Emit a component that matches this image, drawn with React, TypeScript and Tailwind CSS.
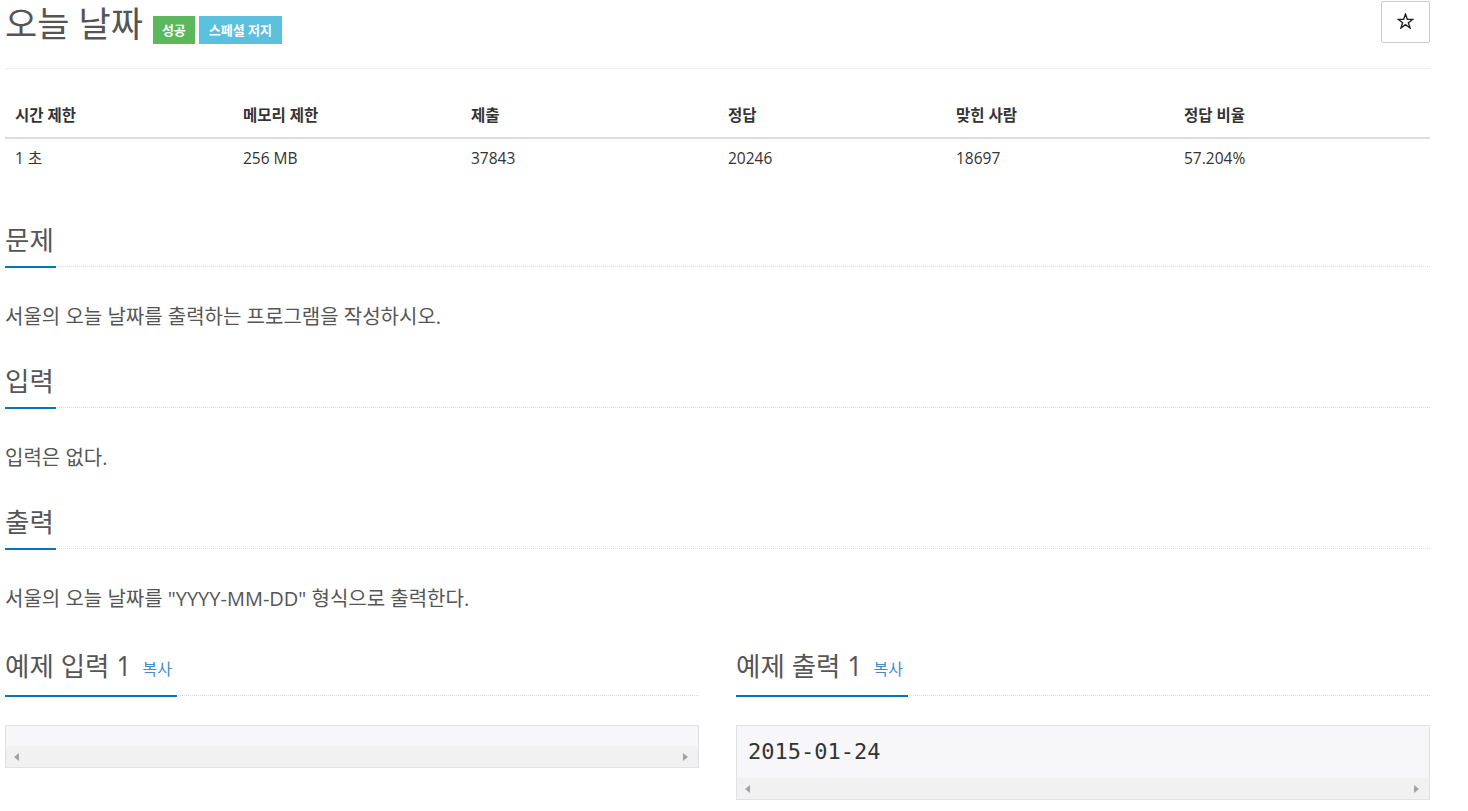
const sans = "font-['Open_Sans','Noto_Sans_CJK_KR',sans-serif]";

const stats = [
  { label: "시간 제한", value: "1 초" },
  { label: "메모리 제한", value: "256 MB" },
  { label: "제출", value: "37843" },
  { label: "정답", value: "20246" },
  { label: "맞힌 사람", value: "18697" },
  { label: "정답 비율", value: "57.204%" },
];

function Headline({ children, copy, className = "" }: { children: React.ReactNode; copy?: boolean; className?: string }) {
  return (
    <div className={`border-b border-dotted border-[#dcdcdc] ${className}`}>
      <h2 className="inline-block mb-[-2px] pb-[8px] pr-[2px] border-b-2 border-[#0076c0] text-[26.5px] leading-[36px] text-[#555] font-normal">
        {children}
        {copy && <span className="ml-[11px] pr-[3px] text-[16px] text-[#428bca] align-[1px]">복사</span>}
      </h2>
    </div>
  );
}

function ScrollBar() {
  return (
    <div className="h-[21px] bg-[#f1f1f1] flex items-center justify-between pl-[8px] pr-[10px]">
      <span className="w-0 h-0 border-y-[4px] border-y-transparent border-r-[5px] border-r-[#a3a3a3]" />
      <span className="w-0 h-0 border-y-[4px] border-y-transparent border-l-[5px] border-l-[#a3a3a3]" />
    </div>
  );
}

function SampleBox({ text }: { text: string }) {
  return (
    <div className="border border-[#e1e1e8] bg-[#f7f7f9]">
      <pre className="px-[11px] py-[10px] font-['DejaVu_Sans_Mono',monospace] text-[22px] leading-[32px] text-[#333] empty:leading-[0px]">
        {text}
      </pre>
      <ScrollBar />
    </div>
  );
}

function StarIcon() {
  return (
    <svg width="17" height="16" viewBox="0 0 24 23" fill="none" stroke="#222" strokeWidth="2" strokeLinejoin="miter">
      <path d="M12 1.5l2.6 7.6h8l-6.5 4.8 2.5 7.7L12 16.8l-6.6 4.8 2.5-7.7L1.4 9.1h8z" />
    </svg>
  );
}

export default function App() {
  return (
    <div className={`${sans} bg-white min-h-[811px] pl-[5px] w-[1430px]`}>
      <header className="flex items-start justify-between pt-[1px] pb-[24px] border-b border-[#eee]">
        <div className="mt-[3px] h-[40px] flex items-end">
          <h1 className="text-[35px] leading-[40px] text-[#555] font-normal">오늘 날짜</h1>
          <span className="ml-[10px] h-[28px] leading-[28px] px-[9px] bg-[#5cb85c] text-white text-[13px] font-bold">성공</span>
          <span className="ml-[4px] h-[28px] leading-[28px] px-[10px] bg-[#5bc0de] text-white text-[13px] font-bold">스페셜 저지</span>
        </div>
        <button className="w-[49px] h-[42px] border border-[#ccc] rounded-[2px] flex items-center justify-center pb-[2px]">
          <StarIcon />
        </button>
      </header>

      <div className="mt-[28px] text-[15.5px] text-[#333]">
        <div className="grid grid-cols-[228px_228px_257px_228px_228px_1fr] border-b-2 border-[#ddd]">
          {stats.map((s) => (
            <div key={s.label} className="pl-[10px] pt-[8px] pb-[12px] leading-[20px] font-bold">
              {s.label}
            </div>
          ))}
        </div>
        <div className="grid grid-cols-[228px_228px_257px_228px_228px_1fr]">
          {stats.map((s) => (
            <div key={s.label} className="pl-[10px] pt-[9px] pb-[8px] leading-[20px]">
              {s.value}
            </div>
          ))}
        </div>
      </div>

      <section className="text-[20px] leading-[26px] text-[#555]">
        <Headline className="mt-[46px]">문제</Headline>
        <p className="mt-[37px]">서울의 오늘 날짜를 출력하는 프로그램을 작성하시오.</p>

        <Headline className="mt-[33px]">입력</Headline>
        <p className="mt-[37px]">입력은 없다.</p>

        <Headline className="mt-[33px]">출력</Headline>
        <p className="mt-[37px]">서울의 오늘 날짜를 "YYYY-MM-DD" 형식으로 출력한다.</p>
      </section>

      <div className="mt-[36px] grid grid-cols-2 gap-[37px]">
        <div>
          <Headline copy>예제 입력 1</Headline>
          <div className="mt-[29px]">
            <SampleBox text="" />
          </div>
        </div>
        <div>
          <Headline copy>예제 출력 1</Headline>
          <div className="mt-[29px]">
            <SampleBox text="2015-01-24" />
          </div>
        </div>
      </div>
    </div>
  );
}
